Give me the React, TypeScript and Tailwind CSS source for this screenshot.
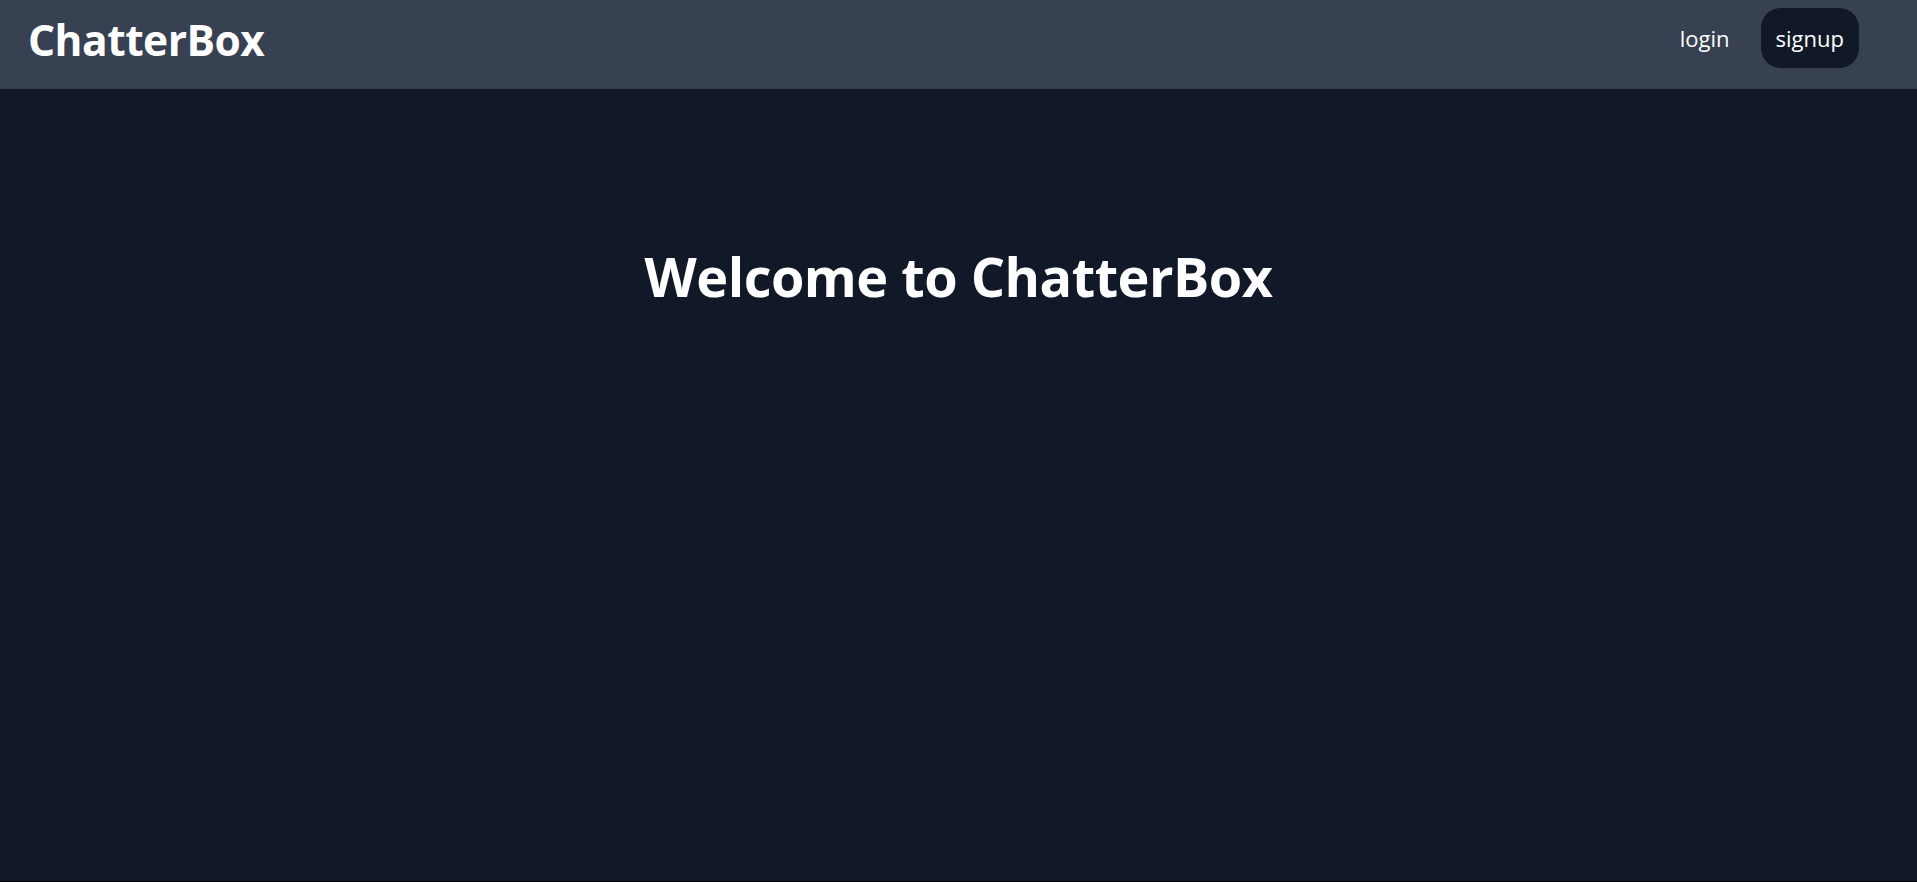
export default function App() {
  return (
    <div className="h-screen flex flex-col bg-[#111827] border-b border-black font-['Open_Sans','Noto_Sans',sans-serif] text-white">
      <nav className="h-[89px] shrink-0 bg-[#374151] flex justify-between items-start px-[28px]">
        <a href="#" className="mt-[12px] text-[42.5px] font-bold leading-[56px] tracking-[-0.5px]">
          ChatterBox
        </a>
        <div className="flex items-center gap-[31px] mt-[8px] mr-[30px]">
          <button className="text-[22px] leading-none">login</button>
          <button className="h-[60px] px-[15px] rounded-[20px] bg-[#111827] text-[22px] leading-none">
            signup
          </button>
        </div>
      </nav>
      <main className="flex-1 flex flex-col items-center pt-[160px]">
        <h1 className="text-[54px] font-bold leading-none tracking-[-0.5px]">
          Welcome to ChatterBox
        </h1>
      </main>
    </div>
  );
}
